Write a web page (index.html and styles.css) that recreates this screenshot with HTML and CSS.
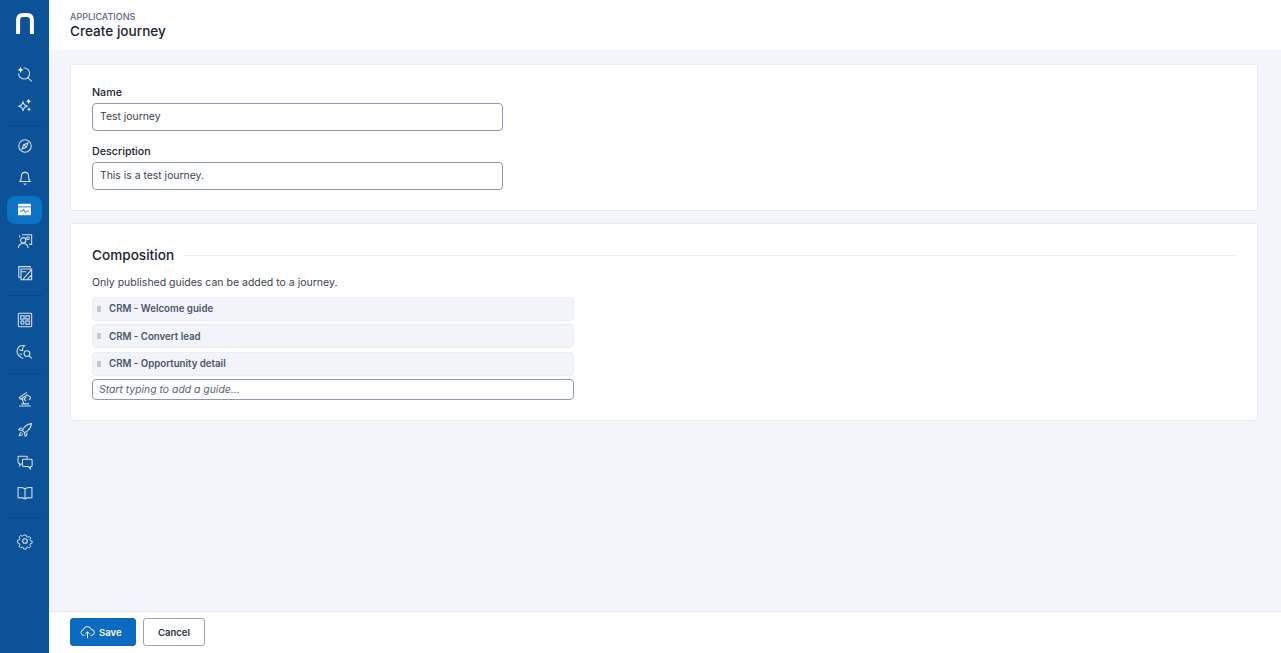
FILE: index.html
```html
<!DOCTYPE html>
<html lang="en">
<head>
<meta charset="utf-8">
<title>Create journey</title>
<link rel="stylesheet" href="styles.css">
</head>
<body>
<div class="app">
  <nav class="sidebar">
    <div class="logo">
      <svg width="18" height="21" viewBox="0 0 18 21"><path d="M2.100 21V7C2.100 3.600 4 2 7 2h4c3 0 4.900 1.600 4.900 5v14" fill="none" stroke="#fff" stroke-width="4"/></svg>
    </div>
    <div class="group g1">
      <a class="item"><svg viewBox="0 0 18 18" class="ic"><path d="M7.500 2.300A6.200 6.200 0 1 1 1.800 8.300M11.500 12.500 16.600 17.300"/><path class="solid" d="M4 .8 5 3.400l2.500 1-2.500 1L4 8 3 5.400.5 4.400l2.500-1z"/></svg></a>
      <a class="item"><svg viewBox="0 0 18 18" class="ic"><path d="m6.800 5.500 1.500 3.300 3.300 1.500-3.300 1.500-1.500 3.300-1.500-3.300L2 10.300l3.300-1.500z"/><path class="solid" d="m13 2 .9 2 2 .9-2 .9-.9 2-.9-2-2-.9 2-.9zM13.500 11.500l.7 1.600 1.600.7-1.600.7-.7 1.600-.7-1.600-1.600-.7 1.600-.7z"/></svg></a>
    </div>
    <div class="divider"></div>
    <div class="group">
      <a class="item"><svg viewBox="0 0 18 18" class="ic"><circle cx="9" cy="9" r="7"/><path d="m12.300 5.700-1.900 4.700-4.700 1.900 1.900-4.700zM7.600 7.600l2.800 2.800"/></svg></a>
      <a class="item"><svg viewBox="0 0 18 18" class="ic"><path d="M9 2.700c-2.400 0-4 1.800-4 4.200 0 3.500-.8 4.900-1.800 6.100h11.600c-1-1.200-1.800-2.600-1.800-6.100 0-2.400-1.600-4.200-4-4.200zM7.500 15.200c.4.700.9 1 1.500 1s1.100-.3 1.500-1M9 1.300v1.400"/></svg></a>
      <a class="item active"><svg viewBox="0 0 18 16" width="15" height="13"><rect x="1" y="1" width="16" height="14" rx="1" fill="#fff"/><path d="M1 4.800h16" stroke="#0b72c4" stroke-width="1.100"/><path d="M3.500 10h3l1.400-2.300 2 4 1.400-1.700h3.200" fill="none" stroke="#0b72c4" stroke-width="1.100"/></svg></a>
      <a class="item"><svg viewBox="0 0 18 18" class="ic"><path d="M5.500 2h11v10.800h-2.800M3 5V2.500"/><circle cx="7" cy="8.200" r="3"/><path d="M1.500 16.800c.3-3.200 2.500-5 5.500-5s5.200 1.800 5.500 5"/><circle cx="12.300" cy="5.800" r="1.500"/></svg></a>
      <a class="item"><svg viewBox="0 0 18 18" class="ic"><path d="M15 3V1.800H2v12h2"/><path d="M4.500 4.500h12v12h-12zM4.500 7.500h6M16.500 5 6.500 16.500M16.500 11 11.500 16.500"/></svg></a>
    </div>
    <div class="divider d2"></div>
    <div class="group">
      <a class="item"><svg viewBox="0 0 18 18" class="ic"><rect x="1.500" y="1.500" width="15" height="15" rx="1"/><rect x="4.200" y="4.200" width="3.800" height="3.800"/><rect x="10" y="4.200" width="3.800" height="3.800"/><rect x="4.200" y="10" width="3.800" height="3.800" rx="1.900"/><rect x="10" y="10" width="3.800" height="3.800"/></svg></a>
      <a class="item"><svg viewBox="0 0 18 18" class="ic"><path d="M9.500 2.200A6.700 6.700 0 0 0 4 14.500c1 1 2 1.500 3 1.800M2.800 6.500c2 1 3.200 1 4.200.4M7.500 2.500c-1.500 2-1.500 4-1 5.500M3 11c1 .5 2 .5 2.500.3"/><circle cx="11.200" cy="10.800" r="3.300"/><path d="m13.600 13.200 3 3"/></svg></a>
    </div>
    <div class="divider d3"></div>
    <div class="group">
      <a class="item"><svg viewBox="0 0 18 18" class="ic"><path d="M2.500 16.800h13M5 14.500h8.500M11 1.500 2.500 7.500l1.800 1.800 7-5 3.700 2.500v2l-1.500 1.200M7 6.500l-1 3 1.800 5M10.500 6.500 8 9.500l2 1.500"/></svg></a>
      <a class="item"><svg viewBox="0 0 18 18" class="ic"><path d="M16.200 1.800c-3.400.3-6 1.700-8.200 4.400l-2 3.300 2.500 2.500 3.300-2c2.700-2.200 4.100-4.800 4.400-8.200zM6 6.700 3 7.200l-1 1.600 3.500.7M11.300 12l-.5 3-1.600 1-.7-3.500M5 11.500c-1.400.5-2.200 2-2.500 4 2-.3 3.500-1.100 4-2.500"/></svg></a>
      <a class="item"><svg viewBox="0 0 18 18" class="ic"><path d="M11.500 5V3.500a1 1 0 0 0-1-1H2.200a1 1 0 0 0-1 1v6a1 1 0 0 0 1 1h.8v2.700l2.300-2.500"/><path d="M7.200 6H16a1 1 0 0 1 1 1v6a1 1 0 0 1-1 1h-1v2.700L12.600 14H7.200a1 1 0 0 1-1-1V7a1 1 0 0 1 1-1z"/></svg></a>
      <a class="item"><svg viewBox="0 0 18 18" class="ic"><path d="M9 4.200C7.500 3 5 2.700 1.200 2.800v11.400c3.800 0 6.300.2 7.800 1.400 1.500-1.200 4-1.400 7.800-1.400V2.800C13 2.700 10.500 3 9 4.200zM9 4.200v12"/></svg></a>
    </div>
    <div class="divider d4"></div>
    <div class="group">
      <a class="item"><svg viewBox="0 0 18 18" class="ic"><circle cx="9" cy="9" r="2.600"/><path d="m7.600 1.500h2.800l.5 2.100 1.500.7 1.900-1 2 2-1.100 1.900.7 1.500 2.100.5v.1h-.1v2.400l-2 .5-.7 1.500 1 1.900-2 2-1.900-1.100-1.500.7-.5 2H7.500l-.5-2-1.500-.7-1.900 1.100-2-2 1-1.900-.7-1.500-2-.5V7.900l2.100-.5.700-1.500-1.100-1.900 2-2 1.900 1 1.500-.7z" transform="translate(.9 .9) scale(.9)"/></svg></a>
    </div>
  </nav>
  <div class="main">
    <header class="topbar">
      <div class="crumb">APPLICATIONS</div>
      <h1>Create journey</h1>
    </header>
    <main class="content">
      <section class="card details">
        <div class="field">
          <label>Name</label>
          <div class="input">Test journey</div>
        </div>
        <div class="field">
          <label>Description</label>
          <div class="input">This is a test journey.</div>
        </div>
      </section>
      <section class="card composition">
        <div class="heading"><h2>Composition</h2><span class="rule"></span></div>
        <p class="hint">Only published guides can be added to a journey.</p>
        <ul class="guides">
          <li><svg class="grip" viewBox="0 0 4 6" width="4" height="6"><circle cx="1" cy="1" r=".65"/><circle cx="3" cy="1" r=".65"/><circle cx="1" cy="3" r=".65"/><circle cx="3" cy="3" r=".65"/><circle cx="1" cy="5" r=".65"/><circle cx="3" cy="5" r=".65"/></svg>CRM - Welcome guide</li>
          <li><svg class="grip" viewBox="0 0 4 6" width="4" height="6"><circle cx="1" cy="1" r=".65"/><circle cx="3" cy="1" r=".65"/><circle cx="1" cy="3" r=".65"/><circle cx="3" cy="3" r=".65"/><circle cx="1" cy="5" r=".65"/><circle cx="3" cy="5" r=".65"/></svg>CRM - Convert lead</li>
          <li><svg class="grip" viewBox="0 0 4 6" width="4" height="6"><circle cx="1" cy="1" r=".65"/><circle cx="3" cy="1" r=".65"/><circle cx="1" cy="3" r=".65"/><circle cx="3" cy="3" r=".65"/><circle cx="1" cy="5" r=".65"/><circle cx="3" cy="5" r=".65"/></svg>CRM - Opportunity detail</li>
        </ul>
        <div class="search">Start typing to add a guide...</div>
      </section>
    </main>
    <footer class="footer">
      <button class="btn primary"><svg viewBox="0 0 18 16" width="15" height="14" fill="none" stroke="#fff" stroke-width="1.200"><path d="M5.500 12H4.200A3.400 3.400 0 0 1 4 5.300 5 5 0 0 1 13.600 5a3.500 3.500 0 0 1 .2 7h-1.300M9 15.500V8M6.500 10.300 9 7.800l2.500 2.500"/></svg>Save</button>
      <button class="btn ghost">Cancel</button>
    </footer>
  </div>
</div>
</body>
</html>
```
FILE: styles.css
```css
* { box-sizing: border-box; }
html, body { margin: 0; height: 100%; }
body { font-family: Inter, "Liberation Sans", sans-serif; color: #1b2430; background: #f3f5fa; overflow: hidden; }
.app { display: flex; height: 653px; }
.sidebar { width: 49px; flex: none; background: #0b5298; display: flex; flex-direction: column; align-items: center; }
.logo { height: 58px; padding-top: 13px; display: flex; justify-content: center; align-items: flex-start; }
.group { display: flex; flex-direction: column; width: 100%; align-items: center; }
.item { width: 35px; height: 31.500px; display: flex; align-items: center; justify-content: center; border-radius: 8px; }
.item.active { background: #0b72c4; height: 28px; margin: 2px 0; }
.ic { width: 16px; height: 16px; fill: none; stroke: #d5e1ef; stroke-width: 1.200; overflow: visible; }
.ic .solid { fill: #fff; stroke: none; }
.divider { width: 35px; height: 1px; background: #0a4680; margin: 4px 0 4.500px; flex: none; }
.d2 { margin: 6.500px 0 8.500px; }
.d3 { margin: 5px 0 9.500px; }
.d4 { margin: 7.500px 0 7.500px; }
.main { flex: 1; min-width: 0; display: flex; flex-direction: column; }
.topbar { height: 50px; background: #fff; padding: 11px 21px 0; flex: none; }
.crumb { font-size: 9px; line-height: 11px; font-weight: 500; color: #5b6785; }
h1 { margin: 0; font-size: 13.600px; line-height: 18px; font-weight: 500; color: #1b2430; }
.content { flex: 1; padding: 14px 23px 0 21px; display: flex; flex-direction: column; gap: 12px; }
.card { background: #fff; border: 1px solid #e8ebf2; border-radius: 3px; padding: 0 21px; }
.details { height: 147px; padding-top: 20.500px; }
.field { display: flex; flex-direction: column; width: 411px; }
.field + .field { margin-top: 13.500px; }
label { font-size: 10.700px; line-height: 13px; font-weight: 500; margin-bottom: 4.500px; color: #1b2430; }
.input { height: 28px; border: 1px solid #8e9ab3; border-radius: 4px; padding: 0 7px; font-size: 10.400px; line-height: 26px; color: #3c4350; }
.composition { height: 198px; padding-top: 22px; }
.heading { display: flex; align-items: center; gap: 10px; }
h2 { margin: 0; font-size: 13.600px; line-height: 18px; font-weight: 500; color: #1b2430; }
.rule { flex: 1; height: 1px; background: #e8ebf2; }
.hint { margin: 12px 0 0; font-size: 10.500px; line-height: 14px; color: #3c4350; }
.guides { list-style: none; margin: 6.500px 0 0; padding: 0; width: 482px; display: flex; flex-direction: column; gap: 3.500px; }
.guides li { height: 24px; background: #f3f4fa; border: 1px solid #eceef5; border-radius: 4px; display: flex; align-items: center; padding-left: 4px; font-size: 9.700px; font-weight: 600; color: #4b5470; }
.grip { flex: none; margin-right: 8px; fill: #6c7690; }
.search { width: 482px; height: 21px; margin-top: 3.500px; border: 1px solid #8e9ab3; border-radius: 4px; padding: 0 6px; font-size: 10.400px; line-height: 20px; font-style: italic; color: #5a6171; }
.footer { height: 42px; flex: none; background: #fff; border-top: 1px solid #e4e7ef; padding: 6px 21px 0; display: flex; gap: 7px; align-items: flex-start; }
.btn { height: 28px; border-radius: 3px; font-family: inherit; font-size: 9.500px; font-weight: 600; display: flex; align-items: center; justify-content: center; padding: 0; }
.primary { width: 66px; background: #0b6bc0; border: 1px solid #0b6bc0; color: #fff; gap: 4px; justify-content: flex-start; padding-left: 9px; }
.ghost { width: 62px; background: #fff; border: 1px solid #9aa5bc; color: #2b303a; }
```
